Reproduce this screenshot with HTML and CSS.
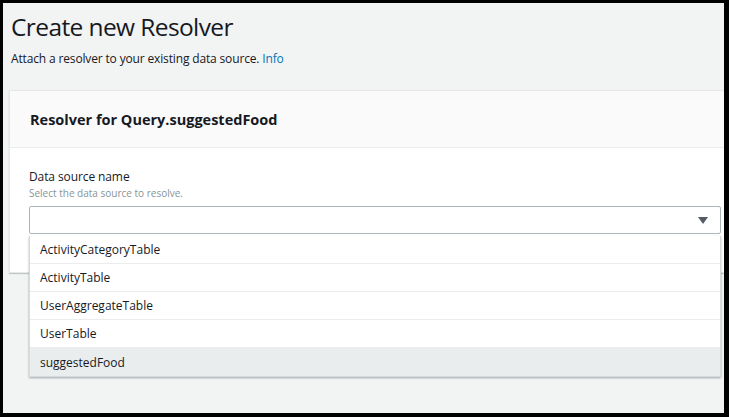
FILE: index.html
```html
<!DOCTYPE html>
<html>
<head>
<meta charset="utf-8">
<link rel="stylesheet" href="styles.css">
</head>
<body>
<div class="frame">
  <div class="page">
    <h1 class="title">Create new Resolver</h1>
    <p class="subtitle">Attach a resolver to your existing data source. <a class="info">Info</a></p>
    <div class="card">
      <div class="card-header">Resolver for Query.suggestedFood</div>
      <div class="card-body">
        <div class="label">Data source name</div>
        <div class="desc">Select the data source to resolve.</div>
        <div class="select-wrap">
          <div class="select">
            <svg class="caret" width="10" height="7" viewBox="0 0 10 7"><path d="M0 0 H10 L5 7 Z" fill="#545b64"/></svg>
          </div>
          <ul class="menu">
            <li>ActivityCategoryTable</li>
            <li>ActivityTable</li>
            <li>UserAggregateTable</li>
            <li>UserTable</li>
            <li class="active">suggestedFood</li>
          </ul>
        </div>
      </div>
    </div>
  </div>
</div>
</body>
</html>
```
FILE: styles.css
```css
html, body { margin: 0; padding: 0; }
body { background: #000; font-family: "Open Sans", "Noto Sans", sans-serif; color: #16191f; }
.frame {
  width: 729px; height: 417px; box-sizing: border-box;
  border-style: solid; border-color: #000;
  border-width: 3px 5px 4px 3px;
}
.page {
  background: #f2f3f3; height: 100%; overflow: hidden; position: relative;
  padding: 0 0 0 6px; box-sizing: border-box;
}
.title {
  margin: 0; padding: 9px 0 0 2px;
  font-size: 24.5px; letter-spacing: -0.6px; font-weight: 400; line-height: 30px; color: #16191f;
}
.subtitle {
  margin: 9px 0 0 2px; font-size: 12px; letter-spacing: -0.15px; line-height: 16px; color: #16191f;
}
.info { color: #0073bb; }
.card {
  margin-top: 23px; width: 730px;
  background: #fff; border: 1px solid #e6e8e8; box-sizing: border-box;
  box-shadow: 0 1px 1px rgba(0,28,36,0.2);
}
.card-header {
  background: #fafafa; border-bottom: 1px solid #eaeded;
  height: 57px; box-sizing: border-box; padding: 0 0 0 20px;
  display: flex; align-items: center;
  font-size: 14.5px; font-weight: 700; color: #16191f;
}
.card-body { padding: 21px 20px 38px 19px; }
.label { font-size: 12px; letter-spacing: -0.1px; line-height: 16px; color: #16191f; }
.desc { font-size: 10px; line-height: 14px; color: #879596; margin-top: 1px; margin-bottom: 6px; }
.select-wrap { position: relative; width: 692px; }
.select {
  height: 28px; box-sizing: border-box; border: 1px solid #aab7b8; border-radius: 2px;
  background: #fff; display: flex; align-items: center; justify-content: flex-end;
  padding-right: 12px;
}
.menu {
  position: absolute; left: 0; top: 30px; width: 692px;
  margin: 0; padding: 0; list-style: none; background: #fff;
  border: 1px solid #d5dbdb; border-top: none; box-sizing: border-box;
  box-shadow: 0 1px 2px rgba(0,28,36,0.35);
  z-index: 2;
}
.menu li {
  height: 28px; box-sizing: border-box; border-bottom: 1px solid #eaeded;
  display: flex; align-items: center; padding-left: 10px;
  font-size: 12px; color: #16191f;
}
.menu li:last-child { border-bottom: none; }
.menu li.active { background: #eaeded; }
```
